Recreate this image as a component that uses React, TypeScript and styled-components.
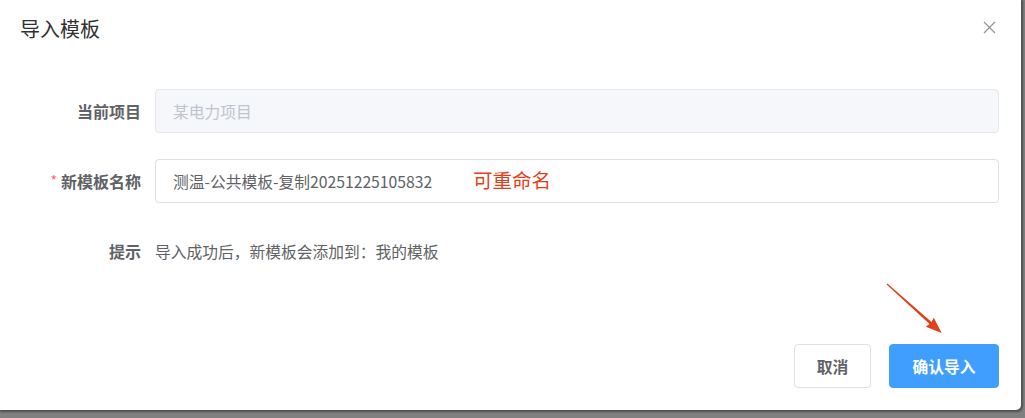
import React from "react";
import styled, { createGlobalStyle } from "styled-components";

const GlobalStyle = createGlobalStyle`
  html, body {
    margin: 0;
    padding: 0;
    background: #808080;
  }
  body {
    font-family: "Noto Sans CJK SC", "Noto Sans", "Liberation Sans", sans-serif;
    -webkit-font-smoothing: antialiased;
  }
`;

const Backdrop = styled.div`
  width: 1025px;
  height: 418px;
  background: #808080;
  overflow: hidden;
`;

const Dialog = styled.div`
  position: relative;
  width: 1021px;
  height: 410px;
  background: #ffffff;
  border-radius: 0 0 5px 0;
  box-shadow: 1px 1px 2px 1px rgba(40, 40, 40, 0.55);
  display: flex;
  flex-direction: column;
  box-sizing: border-box;
`;

const Header = styled.div`
  height: 60px;
  padding: 0 25px 0 20px;
  display: flex;
  align-items: center;
  justify-content: space-between;
  box-sizing: border-box;
`;

const Title = styled.span`
  font-size: 20px;
  color: #303133;
  line-height: 24px;
  margin-top: -2px;
`;

const CloseButton = styled.button`
  border: none;
  background: transparent;
  padding: 0;
  width: 13px;
  height: 13px;
  margin-top: -6px;
  display: flex;
  cursor: pointer;
`;

const Body = styled.div`
  padding-top: 29px;
  display: flex;
  flex-direction: column;
  gap: 26px;
`;

const FormRow = styled.div`
  display: flex;
  align-items: center;
  height: 44px;
  position: relative;
`;

const Label = styled.label`
  width: 141px;
  padding-right: 14px;
  flex-shrink: 0;
  text-align: right;
  font-size: 16px;
  font-weight: 700;
  color: #606266;
`;

const Star = styled.span`
  color: #f56c6c;
  font-weight: 400;
  font-size: 14px;
  margin-right: 4px;
  vertical-align: 2px;
`;

const Field = styled.div<{ $disabled?: boolean }>`
  flex: 1;
  margin-right: 22px;
  height: 44px;
  box-sizing: border-box;
  border: 1px solid ${(p) => (p.$disabled ? "#e4e7ed" : "#dcdfe6")};
  background: ${(p) => (p.$disabled ? "#f5f7fa" : "#ffffff")};
  color: ${(p) => (p.$disabled ? "#c0c4cc" : "#606266")};
  border-radius: 4px;
  padding: 0 17px;
  display: flex;
  align-items: center;
  font-size: 15.75px;
`;

const HintText = styled.span`
  font-size: 15.75px;
  color: #606266;
`;

const Note = styled.span`
  position: absolute;
  left: 473px;
  top: 9px;
  font-size: 19.5px;
  line-height: 24px;
  color: #e2401b;
`;

const Footer = styled.div`
  margin-top: auto;
  padding: 0 22px 22px 0;
  display: flex;
  justify-content: flex-end;
  gap: 18px;
`;

const Button = styled.button<{ $primary?: boolean }>`
  box-sizing: border-box;
  height: 44px;
  padding: 0;
  white-space: nowrap;
  border-radius: 4px;
  font-family: inherit;
  font-size: 15.75px;
  font-weight: 700;
  cursor: pointer;
  border: 1px solid ${(p) => (p.$primary ? "#409eff" : "#dcdfe6")};
  background: ${(p) => (p.$primary ? "#409eff" : "#ffffff")};
  color: ${(p) => (p.$primary ? "#ffffff" : "#606266")};
  width: ${(p) => (p.$primary ? "110px" : "77px")};
`;

const ArrowLayer = styled.svg`
  position: absolute;
  left: 0;
  top: 0;
  pointer-events: none;
`;

export default function App() {
  return (
    <>
      <GlobalStyle />
      <Backdrop>
        <Dialog>
          <Header>
            <Title>导入模板</Title>
            <CloseButton aria-label="关闭">
              <svg width="13" height="13" viewBox="0 0 13 13">
                <path d="M1 1 L12 12 M12 1 L1 12" stroke="#909399" strokeWidth="1.2" fill="none" />
              </svg>
            </CloseButton>
          </Header>
          <Body>
            <FormRow>
              <Label>当前项目</Label>
              <Field $disabled>某电力项目</Field>
            </FormRow>
            <FormRow>
              <Label>
                <Star>*</Star>新模板名称
              </Label>
              <Field>测温-公共模板-复制20251225105832</Field>
              <Note>可重命名</Note>
            </FormRow>
            <FormRow>
              <Label>提示</Label>
              <HintText>导入成功后，新模板会添加到：我的模板</HintText>
            </FormRow>
          </Body>
          <Footer>
            <Button>取消</Button>
            <Button $primary>确认导入</Button>
          </Footer>
          <ArrowLayer width="1021" height="410" viewBox="0 0 1021 410">
            <polygon
              points="887.4,283.55 931.5,321.9 933.8,317.8 941.7,333 925.8,326.8 929.5,324.1 886.6,284.45"
              fill="#e04119"
            />
          </ArrowLayer>
        </Dialog>
      </Backdrop>
    </>
  );
}
